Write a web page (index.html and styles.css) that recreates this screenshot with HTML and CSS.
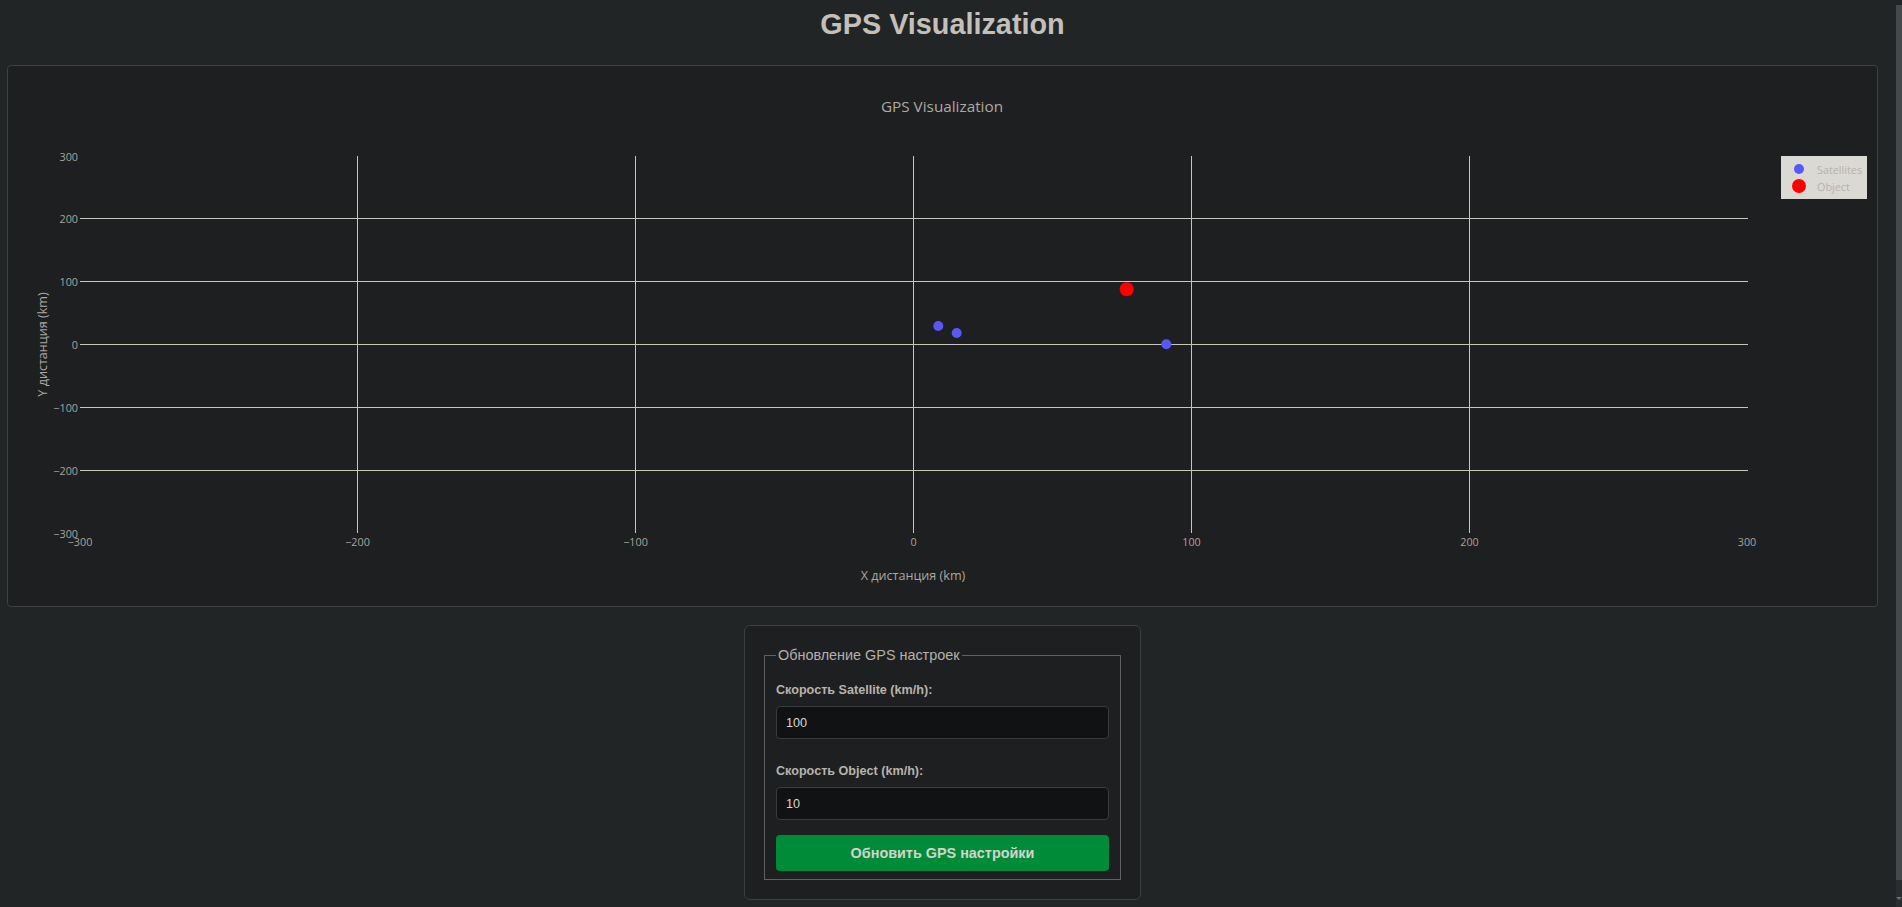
FILE: index.html
```html
<!DOCTYPE html>
<html lang="ru">
<head>
<meta charset="utf-8">
<title>GPS Visualization</title>
<link rel="stylesheet" href="styles.css">
</head>
<body>
<div class="main">
  <h1 class="page-title">GPS Visualization</h1>
  <div class="plot-card">
    <svg class="plot" width="1869" height="540" viewBox="0 0 1869 540">
      <text class="plot-title" x="934" y="39.5">GPS Visualization</text>
      <g class="grid">
        <line x1="349.5" y1="90" x2="349.5" y2="467"/>
        <line x1="627.5" y1="90" x2="627.5" y2="467"/>
        <line x1="905.5" y1="90" x2="905.5" y2="467"/>
        <line x1="1183.5" y1="90" x2="1183.5" y2="467"/>
        <line x1="1461.5" y1="90" x2="1461.5" y2="467"/>
        <line x1="72" y1="152.5" x2="1740" y2="152.5"/>
        <line x1="72" y1="215.5" x2="1740" y2="215.5"/>
        <line x1="72" y1="278.5" x2="1740" y2="278.5"/>
        <line x1="72" y1="341.5" x2="1740" y2="341.5"/>
        <line x1="72" y1="404.5" x2="1740" y2="404.5"/>
      </g>
      <g class="ytick">
        <text x="70" y="90">300</text>
        <text x="70" y="152.5">200</text>
        <text x="70" y="215.5">100</text>
        <text x="70" y="278.5">0</text>
        <text x="70" y="341.5">−100</text>
        <text x="70" y="404.5">−200</text>
        <text x="70" y="467.5">−300</text>
      </g>
      <g class="xtick">
        <text x="72" y="475.5">−300</text>
        <text x="349.5" y="475.5">−200</text>
        <text x="627.5" y="475.5">−100</text>
        <text x="905.5" y="475.5">0</text>
        <text x="1183.5" y="475.5">100</text>
        <text x="1461.5" y="475.5">200</text>
        <text x="1739" y="475.5">300</text>
      </g>
      <text class="axis-title" x="905" y="509.5">X дистанция (km)</text>
      <text class="axis-title" x="34" y="278.5" transform="rotate(-90 34 278.5)">Y дистанция (km)</text>
      <g class="sat">
        <circle cx="930.3" cy="260" r="5"/>
        <circle cx="948.7" cy="267" r="5"/>
        <circle cx="1158.3" cy="278.3" r="5"/>
      </g>
      <circle class="obj" cx="1118.7" cy="223.3" r="7"/>
      <g class="legend">
        <rect x="1773" y="90" width="86" height="43"/>
        <circle class="sat-l" cx="1791" cy="103" r="5"/>
        <circle class="obj" cx="1791" cy="120" r="7"/>
        <text x="1809" y="103">Satellites</text>
        <text x="1809" y="120">Object</text>
      </g>
    </svg>
  </div>
  <div class="form-card">
    <form class="gps-form">
      <fieldset class="fs">
        <legend class="fs-legend">Обновление GPS настроек</legend>
        <div class="group group-first">
          <label class="lbl" for="sat">Скорость Satellite (km/h):</label>
          <input class="inp" id="sat" type="number" value="100">
        </div>
        <div class="group">
          <label class="lbl" for="obj">Скорость Object (km/h):</label>
          <input class="inp" id="obj" type="number" value="10">
        </div>
        <button class="btn" type="button">Обновить GPS настройки</button>
      </fieldset>
    </form>
  </div>
</div>
<div class="scrollbar">
  <div class="thumb"></div>
  <div class="track-end"><span class="arrow"></span></div>
</div>
</body>
</html>
```

FILE: styles.css
```css
html, body {
  margin: 0;
  height: 100%;
}
body {
  display: flex;
  overflow: hidden;
  background: #212526;
  font-family: "Liberation Sans", Arial, sans-serif;
  color: #c4c0b9;
}
.main {
  flex: 1;
  min-width: 0;
  padding: 8px 9px 0 7px;
}
.page-title {
  margin: 0 0 24px;
  font-size: 28.8px;
  line-height: 33px;
  font-weight: 700;
  text-align: center;
  color: #c4c0b9;
}
.plot-card {
  box-sizing: border-box;
  height: 542px;
  border: 1px solid #3c4143;
  border-radius: 4px;
  background: #1e1f21;
}
.plot {
  display: block;
  font-family: "Open Sans", sans-serif;
}
.plot-title {
  font-size: 15.3px;
  fill: #aea9a1;
  text-anchor: middle;
  dominant-baseline: central;
}
.grid line {
  stroke: #c9c5be;
  stroke-width: 1;
}
.ytick text, .xtick text {
  font-size: 10.8px;
  fill: #a8a39b;
  dominant-baseline: central;
}
.ytick text { text-anchor: end; }
.xtick text { text-anchor: middle; }
.axis-title {
  font-size: 12.6px;
  fill: #aca79f;
  text-anchor: middle;
  dominant-baseline: central;
}
.sat circle, .sat-l { fill: #5858f4; }
.obj { fill: #ff0000; }
.legend rect { fill: #dbd9d4; }
.legend text {
  font-size: 10.8px;
  fill: #b6b2ab;
  dominant-baseline: central;
}
.form-card {
  box-sizing: border-box;
  width: 397px;
  margin: 18px auto 0;
  padding: 19px;
  border: 1px solid #3b4043;
  border-radius: 6px;
  background: #1e1f21;
}
.gps-form { margin: 0; }
.fs {
  margin: 0;
  padding: 18px 11px 8px;
  border: 1px solid #606060;
  min-width: 0;
}
.fs-legend {
  padding: 0 2px;
  font-size: 14.4px;
  line-height: 20px;
  color: #b5b0a8;
}
.group { margin-bottom: 15px; }
.group-first { margin-bottom: 25px; }
.lbl {
  display: block;
  margin-bottom: 8px;
  font-size: 12.6px;
  line-height: 15px;
  font-weight: 700;
  color: #b8b3ab;
}
.inp {
  display: block;
  box-sizing: border-box;
  width: 100%;
  height: 33px;
  padding: 0 9px;
  border: 1px solid #383c3e;
  border-radius: 4px;
  background: #111213;
  color: #dcd8d1;
  font-family: "Liberation Sans", Arial, sans-serif;
  font-size: 12.6px;
  outline: none;
  -moz-appearance: textfield;
}
.inp::-webkit-outer-spin-button,
.inp::-webkit-inner-spin-button {
  -webkit-appearance: none;
  margin: 0;
}
.btn {
  display: block;
  width: 100%;
  height: 36px;
  border: none;
  border-radius: 4px;
  background: #008b39;
  color: #d6d2cb;
  font-family: "Liberation Sans", Arial, sans-serif;
  font-size: 14.4px;
  font-weight: 700;
  cursor: pointer;
}
.scrollbar {
  flex: none;
  width: 15px;
  display: flex;
  flex-direction: column;
  background: #212526;
}
.thumb {
  margin: 5px 0 0 9px;
  height: 875px;
  background: #45494c;
}
.track-end {
  flex: 1;
  margin-left: 9px;
  background: #2a2d2f;
  display: flex;
  align-items: flex-end;
  justify-content: center;
  padding-bottom: 7px;
}
.arrow {
  width: 0;
  height: 0;
  border-left: 3px solid transparent;
  border-right: 3px solid transparent;
  border-top: 3px solid #6b6f72;
}
```
